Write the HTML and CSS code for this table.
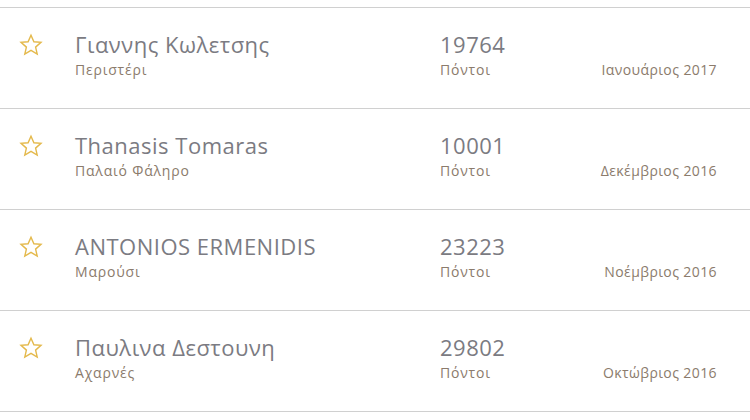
FILE: index.html
```html
<!DOCTYPE html>
<html lang="el">
<head>
<meta charset="utf-8">
<link rel="stylesheet" href="styles.css">
</head>
<body>
<ul class="list">
  <li class="row">
    <div class="star"><svg viewBox="0 0 24 24" width="24" height="24"><path d="M12 2.2l2.9 6.6 7.1.6-5.4 4.7 1.6 7-6.2-3.7-6.2 3.7 1.6-7L2 9.4l7.1-.6z"/></svg></div>
    <div class="who"><div class="name">Γιαννης Κωλετσης</div><div class="sub">Περιστέρι</div></div>
    <div class="pts"><div class="num">19764</div><div class="sub">Πόντοι</div></div>
    <div class="date">Ιανουάριος 2017</div>
  </li>
  <li class="row">
    <div class="star"><svg viewBox="0 0 24 24" width="24" height="24"><path d="M12 2.2l2.9 6.6 7.1.6-5.4 4.7 1.6 7-6.2-3.7-6.2 3.7 1.6-7L2 9.4l7.1-.6z"/></svg></div>
    <div class="who"><div class="name">Thanasis Tomaras</div><div class="sub">Παλαιό Φάληρο</div></div>
    <div class="pts"><div class="num">10001</div><div class="sub">Πόντοι</div></div>
    <div class="date">Δεκέμβριος 2016</div>
  </li>
  <li class="row">
    <div class="star"><svg viewBox="0 0 24 24" width="24" height="24"><path d="M12 2.2l2.9 6.6 7.1.6-5.4 4.7 1.6 7-6.2-3.7-6.2 3.7 1.6-7L2 9.4l7.1-.6z"/></svg></div>
    <div class="who"><div class="name">ANTONIOS ERMENIDIS</div><div class="sub">Μαρούσι</div></div>
    <div class="pts"><div class="num">23223</div><div class="sub">Πόντοι</div></div>
    <div class="date">Νοέμβριος 2016</div>
  </li>
  <li class="row">
    <div class="star"><svg viewBox="0 0 24 24" width="24" height="24"><path d="M12 2.2l2.9 6.6 7.1.6-5.4 4.7 1.6 7-6.2-3.7-6.2 3.7 1.6-7L2 9.4l7.1-.6z"/></svg></div>
    <div class="who"><div class="name">Παυλινα Δεστουνη</div><div class="sub">Αχαρνές</div></div>
    <div class="pts"><div class="num">29802</div><div class="sub">Πόντοι</div></div>
    <div class="date">Οκτώβριος 2016</div>
  </li>
</ul>
</body>
</html>
```
FILE: styles.css
```css
* { box-sizing: border-box; }
html, body { margin: 0; padding: 0; background: #fff; }
body { font-family: "Open Sans", "DejaVu Sans", sans-serif; }
.list {
  list-style: none;
  margin: 0;
  padding: 7px 0 0;
}
.row {
  display: flex;
  align-items: flex-start;
  height: 101px;
  border-top: 1px solid #d0d0d0;
  padding: 23px 33px 0 19px;
}
.row:last-child { border-bottom: 1px solid #d0d0d0; height: 102px; }
.star { width: 56px; padding-top: 2px; }
.star svg { display: block; fill: none; stroke: #e4b94c; stroke-width: 1.4; stroke-linejoin: miter; }
.who { width: 365px; }
.name, .num {
  font-size: 22px;
  line-height: 27px;
  letter-spacing: 0.5px;
  color: #7b7b82;
}
.sub {
  font-size: 14px;
  line-height: 20px;
  letter-spacing: 0.8px;
  color: #8b7b6c;
  margin-top: 2px;
}
.pts { flex: 1; }
.date {
  font-size: 14px;
  line-height: 20px;
  letter-spacing: 0.4px;
  color: #8b7b6c;
  margin-top: 29px;
  text-align: right;
}
```
